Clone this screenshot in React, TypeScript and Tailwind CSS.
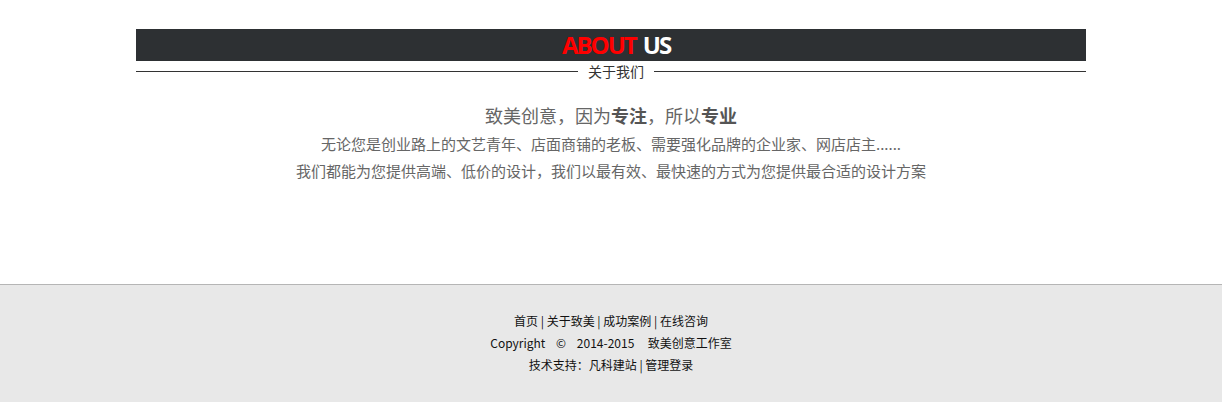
import React from 'react';

const cjk = { fontFamily: '"Microsoft YaHei", "Noto Sans CJK SC", "Noto Sans", sans-serif' };

export default function App() {
  return (
    <div className="min-h-[402px] bg-white flex flex-col" style={cjk}>
      <section className="w-[950px] mx-auto pt-[29px] h-[284px]">
        <div className="h-[32px] bg-[#2d3033] flex items-center justify-center pl-[10px]">
          <h2
            className="text-[24px] font-bold tracking-[-2px] leading-none"
            style={{ fontFamily: '"Open Sans", sans-serif' }}
          >
            <span className="text-[#ff0000]">ABOUT</span>
            <span className="text-white ml-[7px]">US</span>
          </h2>
        </div>
        <div className="flex items-center h-[20px]">
          <div className="w-[442px] h-px bg-[#333]" />
          <span className="px-[10px] text-[14px] text-[#333] leading-none">关于我们</span>
          <div className="flex-1 h-px bg-[#333]" />
        </div>
        <div className="text-center text-[#666] mt-[22px]">
          <p className="text-[18px] leading-[24px]">
            致美创意，因为<b className="text-[#555]">专注</b>，所以<b className="text-[#555]">专业</b>
          </p>
          <p className="text-[15px] leading-[27px] mt-[3px]">
            无论您是创业路上的文艺青年、店面商铺的老板、需要强化品牌的企业家、网店店主......
          </p>
          <p className="text-[15px] leading-[27px]">
            我们都能为您提供高端、低价的设计，我们以最有效、最快速的方式为您提供最合适的设计方案
          </p>
        </div>
      </section>
      <footer className="flex-1 bg-[#e8e8e8] border-t border-[#b5b5b5] pt-[25px] pb-[26px] text-center text-[12px] text-[#111] leading-[22px]">
        <p>首页 | 关于致美 | 成功案例 | 在线咨询</p>
        <p className="whitespace-pre">Copyright    ©    2014-2015     致美创意工作室</p>
        <p>技术支持：凡科建站 | 管理登录</p>
      </footer>
    </div>
  );
}
